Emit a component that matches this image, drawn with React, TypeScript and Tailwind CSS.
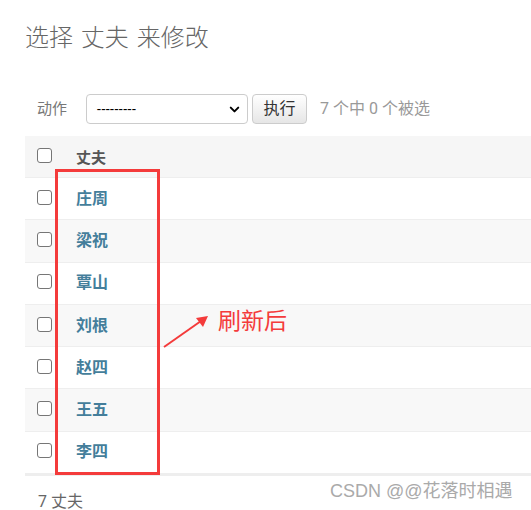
import { ChevronDown } from "lucide-react";

const husbands = ["庄周", "梁祝", "覃山", "刘根", "赵四", "王五", "李四"];

const CheckBox = () => (
  <div className="w-[15px] h-[15px] rounded-[3px] border border-[#767676] bg-white" />
);

const App = () => {
  return (
    <section className="relative w-[531px] h-[510px] overflow-hidden bg-white font-['Roboto','Noto_Sans_CJK_SC',sans-serif]">
      {/* Title */}
      <h1 className="mt-[26px] ml-[25px] h-[24px] leading-[24px] text-[24px] font-light text-[#666] [word-spacing:2px]">
        选择 丈夫 来修改
      </h1>

      {/* Actions */}
      <div className="mt-[44px] ml-[37px] flex items-center h-[30px] text-[15px]">
        <span className="text-[#777]">动作</span>
        <div className="ml-[19px] w-[162px] h-[30px] rounded-[4px] border border-[#ccc] bg-white flex items-center justify-between pl-[10px] pr-[5px]">
          <span className="text-[14px] text-black tracking-[0.5px]">---------</span>
          <ChevronDown size={15} strokeWidth={3.2} className="text-black" />
        </div>
        <button className="ml-[4px] w-[55px] h-[30px] rounded-[4px] border border-[#ccc] bg-gradient-to-b from-white to-[#e6e6e6] text-[16px] text-[#333]">
          执行
        </button>
        <span className="ml-[13px] text-[16px] text-[#999]">7 个中 0 个被选</span>
      </div>

      {/* Result table */}
      <div className="mt-[12px] ml-[25px] w-[520px]">
        <div className="flex items-center h-[42px] bg-[#f6f6f6] border-b border-[#eee]">
          <div className="w-[51px] pl-[12px] -mt-[3px]">
            <CheckBox />
          </div>
          <span className="mt-[3px] text-[15px] font-bold text-[#555]">丈夫</span>
        </div>
        {husbands.map((name, i) => (
          <div
            key={name}
            className={`flex items-center h-[42.3px] border-b border-[#eee] ${
              i % 2 === 1 ? "bg-[#f8f8f8]" : "bg-white"
            }`}
          >
            <div className="w-[51px] pl-[12px] -mt-[3px]">
              <CheckBox />
            </div>
            <span className="text-[16px] font-bold text-[#447e9b]">{name}</span>
          </div>
        ))}
        <div className="h-[2px] bg-[#eee]" />
      </div>

      {/* Footer */}
      <p className="mt-[18px] ml-[38px] leading-[16px] text-[16px] text-[#666]">7 丈夫</p>

      {/* Red highlight box */}
      <div className="absolute left-[55px] top-[169px] w-[105px] h-[306px] border-[3px] border-[#f43b3b]" />

      {/* Arrow */}
      <svg className="absolute left-0 top-0" width="531" height="510">
        <line x1="164" y1="347" x2="201" y2="321" stroke="#f43b3b" strokeWidth="2" />
        <polygon points="208,316 196,318 203,327" fill="#f43b3b" />
      </svg>
      <span className="absolute left-[218px] top-[307px] leading-[30px] text-[23px] text-[#f43b3b]">
        刷新后
      </span>

      {/* Watermark */}
      <span className="absolute left-[330px] top-[480px] leading-[22px] text-[18px] text-[#aaa] font-['Liberation_Sans','Noto_Sans_CJK_SC',sans-serif]">
        CSDN @@花落时相遇
      </span>
    </section>
  );
};

export default App;
